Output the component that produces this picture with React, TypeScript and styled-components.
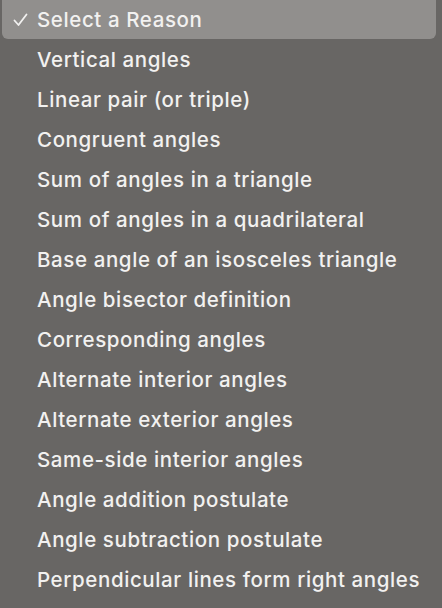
import React from 'react';
import styled, { createGlobalStyle } from 'styled-components';

const GlobalStyle = createGlobalStyle`
  html, body {
    margin: 0;
    padding: 0;
    background: #686664;
  }
`;

const reasons = [
  'Select a Reason',
  'Vertical angles',
  'Linear pair (or triple)',
  'Congruent angles',
  'Sum of angles in a triangle',
  'Sum of angles in a quadrilateral',
  'Base angle of an isosceles triangle',
  'Angle bisector definition',
  'Corresponding angles',
  'Alternate interior angles',
  'Alternate exterior angles',
  'Same-side interior angles',
  'Angle addition postulate',
  'Angle subtraction postulate',
  'Perpendicular lines form right angles',
];

const Menu = styled.ul`
  list-style: none;
  margin: 0;
  padding: 0 6px 8px 2px;
  width: 442px;
  height: 608px;
  box-sizing: border-box;
  background: #686664;
  font-family: Inter, 'Noto Sans', sans-serif;
  font-size: 20.5px;
  font-weight: 500;
  color: #f2f1f0;
  overflow: hidden;
`;

const Item = styled.li<{ $selected?: boolean }>`
  display: flex;
  align-items: center;
  height: 39px;
  margin-bottom: 1px;
  border-radius: 0 0 6px 6px;
  background: ${(p) => (p.$selected ? '#918f8d' : 'transparent')};
`;

const Check = styled.span`
  width: 34px;
  display: flex;
  justify-content: center;
  padding-left: 1px;
`;

const Label = styled.span`
  letter-spacing: 0.6px;
`;

const CheckMark = () => (
  <svg width="15" height="14" viewBox="0 0 15 14">
    <path d="M1.5 7.5 L5.5 12 L13.5 1.5" fill="none" stroke="#f2f1f0" strokeWidth="1.8" strokeLinecap="round" strokeLinejoin="round" />
  </svg>
);

const App = () => (
  <>
    <GlobalStyle />
    <Menu>
      {reasons.map((r, i) => (
        <Item key={r} $selected={i === 0}>
          <Check>{i === 0 && <CheckMark />}</Check>
          <Label>{r}</Label>
        </Item>
      ))}
    </Menu>
  </>
);

export default App;
